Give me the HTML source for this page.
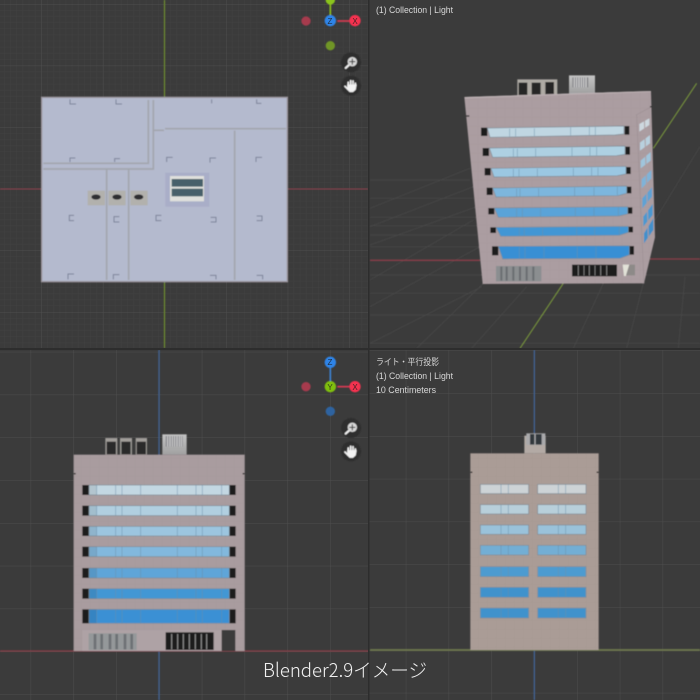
<!DOCTYPE html>
<html lang="ja">
<head>
<meta charset="utf-8">
<title>Blender2.9イメージ</title>
<style>
html,body{margin:0;padding:0;background:#3b3b3b;width:700px;height:700px;overflow:hidden}
svg{display:block}
text{font-family:"Liberation Sans","Noto Sans CJK JP",sans-serif}
.lbl{fill:#d8d8d8;font-size:9px}
.gz{fill:#1b1b1b;text-anchor:middle;font-size:8px;opacity:.8}
</style>
</head>
<body>
<svg width="700" height="700" viewBox="0 0 700 700" xmlns="http://www.w3.org/2000/svg">
<defs>
<filter id="b" x="-5%" y="-5%" width="110%" height="110%"><feGaussianBlur stdDeviation="0.45"/></filter>
<pattern id="gTL" patternUnits="userSpaceOnUse" x="41.3" y="4" width="61.6" height="61.6">
 <path d="M6.16 0V61.6M12.32 0V61.6M18.48 0V61.6M24.64 0V61.6M30.8 0V61.6M36.96 0V61.6M43.12 0V61.6M49.28 0V61.6M55.44 0V61.6M0 6.16H61.6M0 12.32H61.6M0 18.48H61.6M0 24.64H61.6M0 30.8H61.6M0 36.96H61.6M0 43.12H61.6M0 49.28H61.6M0 55.44H61.6" stroke="#414141" stroke-width=".5" fill="none"/>
 <path d="M0 0V61.6M0 0H61.6" stroke="#4e4e4e" stroke-width="1" fill="none"/>
</pattern>
<pattern id="gBL" patternUnits="userSpaceOnUse" x="30.6" y="9.4" width="42.8" height="42.8">
 <path d="M0 0V42.8M0 0H42.8" stroke="#4e4e4e" stroke-width="1" fill="none"/>
</pattern>
<pattern id="gBR" patternUnits="userSpaceOnUse" x="20.6" y="8" width="42.8" height="42.8">
 <path d="M0 0V42.8M0 0H42.8" stroke="#4d4d4d" stroke-width="1" fill="none"/>
</pattern>
<pattern id="tile" patternUnits="userSpaceOnUse" width="27" height="27">
 <path d="M0 0V27M0 0H27" stroke="#8f8285" stroke-opacity=".22" stroke-width="2" fill="none"/>
</pattern>
<linearGradient id="ac" x1="0" y1="0" x2="0" y2="1"><stop offset="0" stop-color="#c4c4c4"/><stop offset="1" stop-color="#a0a0a0"/></linearGradient>
<clipPath id="cTL"><rect x="0" y="0" width="368" height="348"/></clipPath>
<clipPath id="cTR"><rect x="369.5" y="0" width="331" height="348"/></clipPath>
<clipPath id="cBL"><rect x="0" y="350" width="368" height="350"/></clipPath>
<clipPath id="cBR"><rect x="369.5" y="350" width="331" height="350"/></clipPath>
<path id="mBL" d="M290 0V1M347 0V1M366 0V1M422 0V1M532 0V1M588 0V1M607 0V1M665 0V1" stroke="#6b8ea8" stroke-width="2" stroke-opacity=".7" fill="none"/>
<path id="mBR" d="M393 0V1M415 0V1M565 0V1M587 0V1" stroke="#6b8ea8" stroke-width="2" stroke-opacity=".7" fill="none"/>
</defs>

<rect width="700" height="700" fill="#2d2d2d"/>

<!-- TOP LEFT -->
<g clip-path="url(#cTL)">
<rect width="368" height="348" fill="#3b3b3b"/>
<rect width="368" height="348" fill="url(#gTL)"/>
<g filter="url(#b)">
<path d="M0 189H368" stroke="#8a3d48" stroke-width="1"/>
<path d="M164.5 0V348" stroke="#6a8a2c" stroke-width="1.2"/>
<g transform="scale(.33333)">
 <rect x="125" y="292" width="737" height="553" fill="#b4bace" stroke="#9a949c" stroke-width="4"/>
 <rect x="496" y="518" width="132" height="102" fill="#a9aec8"/>
 <g fill="none" stroke="#a3a6ae" stroke-width="5">
  <path d="M130 490H445V300"/>
  <path d="M130 507H460V300"/>
  <path d="M460 391H492M495 386H858"/>
  <path d="M320 505V840M386 505V840M704 392V840"/>
 </g>
 <g fill="none" stroke="#7c8299" stroke-width="3">
  <path d="M210 298v14h18M348 298v14h18M770 298v12h14M635 298v12M210 486v-12h16M344 486v-10h16M500 486v-14h18M630 488v-14h18M768 486v-14h18M222 646h-14v16h14M358 650h-16v16h16M484 646h-16v16h16M632 652h16v14h-16M770 648h16v14h-16M222 822h-18v16M358 824h-18v14M630 826h18v12M770 826h18v12"/>
 </g>
 <rect x="510" y="528" width="102" height="76" fill="#dfe0dc"/>
 <rect x="515" y="537" width="94" height="23" fill="#46606a"/>
 <rect x="515" y="566" width="94" height="23" fill="#46606a"/>
 <g fill="#b2b1ad"><rect x="263" y="572" width="52" height="44"/><rect x="325" y="572" width="52" height="44"/><rect x="391" y="572" width="52" height="44"/></g>
 <g fill="#2f2f31"><ellipse cx="288" cy="591" rx="14" ry="8"/><ellipse cx="351" cy="591" rx="14" ry="8"/><ellipse cx="416" cy="591" rx="14" ry="8"/></g>
 <!-- gizmo -->
 <path d="M991 0V45" stroke="#8bbe1c" stroke-width="5"/>
 <circle cx="991" cy="0" r="14" fill="#8bc41c"/>
 <path d="M1012 63H1050" stroke="#d83a52" stroke-width="5"/>
 <circle cx="991" cy="62" r="17" fill="#2f84e8"/>
 <circle cx="1065" cy="62" r="17" fill="#f5304f"/>
 <circle cx="918" cy="63" r="14" fill="#a63a4e"/>
 <circle cx="991" cy="137" r="14" fill="#6f9525"/>
 <circle cx="1053" cy="187" r="30" fill="#2e2e2e"/>
 <circle cx="1053" cy="257" r="30" fill="#2e2e2e"/>
 <path d="M1048 194L1037 204" stroke="#f0f0f0" stroke-width="6" stroke-linecap="round"/>
 <circle cx="1057" cy="185" r="14" fill="#d8d8d8"/>
 <path d="M1048 185H1066M1057 176V194" stroke="#333" stroke-width="3"/>
 <g stroke="#f2f2f2" stroke-width="5" stroke-linecap="round" fill="#f2f2f2">
  <path d="M1045 258V247M1052 256V242M1059 256V243M1066 260V250M1044 268L1035 259" fill="none"/>
  <path d="M1044 256H1067L1065 268L1058 274H1050L1044 268Z"/>
 </g>
</g>
</g>
<text x="330" y="24" class="gz">Z</text>
<text x="355" y="24" class="gz">X</text>
</g>

<!-- TOP RIGHT -->
<g clip-path="url(#cTR)">
<rect x="369" width="331" height="348" fill="#3b3b3b"/>
<g filter="url(#b)">
<g transform="translate(370,0) scale(.33333)">
 <g stroke="#4a4a4a" stroke-width="2" fill="none">
  <path d="M0 540H300M0 595H310M0 652H320M0 677H320M0 705H320M0 740H330M0 825H990M0 880H990M0 945H990M0 1030H990"/>
  <path d="M0 625L300 505M0 680L310 560M0 735L320 620M0 840L310 660M0 920L330 740M0 1030L335 860M140 1045L340 850M305 1045L470 860M610 1045L700 850M770 1045L820 850M925 1045L945 830M855 660L990 440"/>
 </g>
 <path d="M0 781H330M840 777H990" stroke="#8a3d48" stroke-width="4"/>
 <path d="M450 1045L580 850M850 445L980 250" stroke="#7a9a3c" stroke-width="3" fill="none"/>
 <!-- rooftop -->
 <path d="M442 238H562V290H442Z" fill="#aeaaa4"/>
 <path d="M446 248H472V286H446ZM485 248H512V286H485ZM526 246H552V285H526Z" fill="#262626"/>
 <path d="M597 226H675V282H597Z" fill="url(#ac)"/>
 <path d="M607 232H655V262H607Z" fill="#8a8a8e"/>
 <path d="M613 232v30M620 232v30M627 232v30M634 232v30M641 232v30M648 232v30" stroke="#d6d6d6" stroke-width="3"/>
 <path d="M440 290L600 280L840 274L700 285Z" fill="#b9bdd0"/>
 <!-- body -->
 <path d="M283 291L843 273L855 712L822 850L338 852Z" fill="#ab9da1"/>
 <path d="M283 291L843 273L855 712L822 850L338 852Z" fill="url(#tile)"/>
 <path d="M798 345L845 320M800 345L822 850" stroke="#9c8f93" stroke-width="2" fill="none"/>
 <path d="M283 291L843 273V276L285 295Z" fill="#bcb0b2"/>
 <path d="M288 348h10M840 320h6" stroke="#2a2a2a" stroke-width="4"/>
 <!-- side windows -->
 <path d="M808 372L838 355V375L808 395Z" fill="#cdd8df"/>
 <path d="M810 428L840 405V430L810 452Z" fill="#b8d0de"/>
 <path d="M812 482L842 456V482L812 505Z" fill="#a0c5dc"/>
 <path d="M815 538L844 510V535L815 565Z" fill="#7fb3d8"/>
 <path d="M817 595L846 562V590L817 625Z" fill="#5ea2d4"/>
 <path d="M820 650L848 612V645L820 680Z" fill="#4b98d0"/>
 <path d="M822 700L850 655V690L822 730Z" fill="#4390cb"/>
 <path d="M823 350L836 740" stroke="#ab9da1" stroke-width="3"/>
 <!-- black side blocks -->
 <g fill="#1e1e1e">
  <rect x="333" y="383" width="19" height="25"/><rect x="764" y="378" width="14" height="26"/>
  <rect x="338" y="444" width="19" height="24"/><rect x="766" y="440" width="14" height="24"/>
  <rect x="344" y="504" width="18" height="22"/><rect x="768" y="501" width="14" height="21"/>
  <rect x="350" y="563" width="18" height="22"/><rect x="770" y="560" width="14" height="20"/>
  <rect x="355" y="624" width="18" height="19"/><rect x="773" y="622" width="14" height="19"/>
  <rect x="361" y="682" width="17" height="17"/><rect x="775" y="680" width="14" height="17"/>
  <rect x="366" y="739" width="19" height="27"/><rect x="778" y="738" width="14" height="26"/>
 </g>
 <!-- glass -->
 <g stroke="#808c96" stroke-width="2">
  <path d="M352 384L762 378V402L735 405L360 412Z" fill="#c0d6e2"/>
  <path d="M358 444L765 438V463L740 467L368 472Z" fill="#aed0e2"/>
  <path d="M363 505L768 499V522L742 527L372 531Z" fill="#9bc7e2"/>
  <path d="M368 564L770 558V580L744 587L378 591Z" fill="#7db6dd"/>
  <path d="M373 624L773 620V642L746 648L385 652Z" fill="#5aa3d8"/>
  <path d="M378 682L775 679V697L748 706L392 709Z" fill="#4296d4"/>
  <path d="M385 739L778 737V765L750 775L398 777Z" fill="#388fd4"/>
 </g>
 <path d="M419 386V409M437 386V409M493 385V408M602 382V406M658 381V405M676 381V405M430 446V470M442 446V470M497 445V470M606 443V468M660 442V467M680 441V466M430 507V530M447 507V530M502 506V530M610 504V528M665 503V527M684 503V526M440 566V590M450 566V590M506 565V590M614 563V588M672 562V587M742 560V586M440 626V651M457 626V651M512 625V650M616 624V649M672 623V648M745 622V647M448 684V708M463 684V708M518 683V708M620 682V706M674 681V706M748 681V705M448 741V776M465 740V776M522 740V776M622 739V775M678 738V774" stroke="#6b8ea8" stroke-width="2" stroke-opacity=".7" fill="none"/>
 <!-- ground floor -->
 <rect x="378" y="798" width="136" height="46" fill="#8b8e90"/>
 <path d="M394 800v42M410 800v42M430 800v42M450 800v42M470 800v42M490 800v42" stroke="#6a6d71" stroke-width="6"/>
 <rect x="606" y="794" width="135" height="35" fill="#1f1f1f"/>
 <path d="M625 796v31M642 796v31M658 796v31M675 796v31M692 796v31M710 796v31" stroke="#9a9a9a" stroke-width="2"/>
 <path d="M758 794H778L768 828H762Z" fill="#e2e2d8"/>
 <path d="M778 794H795V826H768Z" fill="#8d8a88"/>
</g>
</g>
<text x="376" y="13" class="lbl" textLength="77" lengthAdjust="spacingAndGlyphs">(1) Collection | Light</text>
</g>

<!-- BOTTOM LEFT -->
<g clip-path="url(#cBL)">
<rect y="350" width="368" height="350" fill="#3b3b3b"/>
<rect y="350" width="368" height="350" fill="url(#gBL)"/>
<g filter="url(#b)">
<g transform="translate(0,350) scale(.33333)">
 <path d="M477 0V1050" stroke="#3f6191" stroke-width="4"/>
 <path d="M0 903H1110" stroke="#8a3d48" stroke-width="4"/>
 <!-- rooftop -->
 <g fill="#a09d99"><rect x="316" y="264" width="36" height="50"/><rect x="360" y="264" width="36" height="50"/><rect x="407" y="264" width="34" height="50"/></g>
 <g fill="#2a2a2a"><rect x="320" y="275" width="28" height="38"/><rect x="364" y="275" width="28" height="38"/><rect x="410" y="275" width="28" height="38"/></g>
 <rect x="487" y="253" width="73" height="61" fill="url(#ac)"/>
 <rect x="497" y="258" width="51" height="32" fill="#8a8a8e"/>
 <path d="M503 258v32M510 258v32M517 258v32M524 258v32M531 258v32M538 258v32M544 258v32" stroke="#d2d2d2" stroke-width="3"/>
 <!-- body -->
 <rect x="221" y="314" width="513" height="589" fill="#a99c9f"/>
 <rect x="221" y="314" width="513" height="589" fill="url(#tile)"/>
 <path d="M221 371h6M728 371h6" stroke="#2a2a2a" stroke-width="4"/>
 <!-- blocks -->
 <g fill="#1f1f1f">
  <rect x="247" y="405" width="20" height="30"/><rect x="688" y="405" width="19" height="30"/>
  <rect x="247" y="467" width="20" height="30"/><rect x="688" y="467" width="19" height="30"/>
  <rect x="247" y="529" width="20" height="29"/><rect x="688" y="529" width="19" height="29"/>
  <rect x="247" y="590" width="20" height="30"/><rect x="688" y="590" width="19" height="30"/>
  <rect x="247" y="654" width="20" height="30"/><rect x="688" y="654" width="19" height="30"/>
  <rect x="247" y="716" width="20" height="30"/><rect x="688" y="716" width="19" height="30"/>
  <rect x="247" y="778" width="20" height="42"/><rect x="688" y="778" width="19" height="42"/>
 </g>
 <g stroke="#808c96" stroke-width="2">
  <rect x="267" y="405" width="421" height="30" fill="#c3d7e2"/>
  <rect x="267" y="467" width="421" height="30" fill="#b1cfe0"/>
  <rect x="267" y="529" width="421" height="29" fill="#9cc5df"/>
  <rect x="267" y="590" width="421" height="30" fill="#82b8dd"/>
  <rect x="267" y="654" width="421" height="30" fill="#5ea5d8"/>
  <rect x="267" y="716" width="421" height="30" fill="#4397d4"/>
  <rect x="267" y="778" width="421" height="42" fill="#3a90d4"/>
 </g>
 <g fill="#000" opacity=".08">
  <rect x="267" y="405" width="23" height="30"/><rect x="267" y="467" width="23" height="30"/><rect x="267" y="529" width="23" height="29"/><rect x="267" y="590" width="23" height="30"/><rect x="267" y="654" width="23" height="30"/><rect x="267" y="716" width="23" height="30"/><rect x="267" y="778" width="23" height="42"/>
 </g>
 <use href="#mBL" transform="translate(0,405) scale(1,30)"/>
 <use href="#mBL" transform="translate(0,467) scale(1,30)"/>
 <use href="#mBL" transform="translate(0,529) scale(1,29)"/>
 <use href="#mBL" transform="translate(0,590) scale(1,30)"/>
 <use href="#mBL" transform="translate(0,654) scale(1,30)"/>
 <use href="#mBL" transform="translate(0,716) scale(1,30)"/>
 <use href="#mBL" transform="translate(0,778) scale(1,42)"/>
 <!-- ground floor -->
 <rect x="247" y="840" width="459" height="63" fill="#aea2a5"/>
 <rect x="266" y="850" width="144" height="50" fill="#94989a"/>
 <path d="M285 852v46M305 852v46M330 852v46M350 852v46M375 852v46M395 852v46" stroke="#6d7175" stroke-width="8"/>
 <rect x="497" y="847" width="144" height="53" fill="#1f1f1f"/>
 <path d="M515 852v46M533 852v46M550 852v46M568 852v46M586 852v46M604 852v46M620 852v46" stroke="#9a9a9a" stroke-width="3"/>
 <rect x="665" y="840" width="41" height="63" fill="#3b3b3b"/>
 <!-- gizmo -->
 <path d="M991 50V95" stroke="#3a80d0" stroke-width="5"/>
 <path d="M1012 110H1050" stroke="#d83a52" stroke-width="5"/>
 <circle cx="991" cy="37" r="17" fill="#2f84e8"/>
 <circle cx="991" cy="110" r="17" fill="#7fbf10"/>
 <circle cx="1065" cy="110" r="17" fill="#f5304f"/>
 <circle cx="918" cy="110" r="14" fill="#a63a4e"/>
 <circle cx="991" cy="184" r="14" fill="#2f64a0"/>
 <circle cx="1053" cy="234" r="30" fill="#2e2e2e"/>
 <circle cx="1053" cy="304" r="30" fill="#2e2e2e"/>
 <path d="M1048 241L1037 251" stroke="#f0f0f0" stroke-width="6" stroke-linecap="round"/>
 <circle cx="1057" cy="232" r="14" fill="#d8d8d8"/>
 <path d="M1048 232H1066M1057 223V241" stroke="#333" stroke-width="3"/>
 <g transform="translate(0,47)" stroke="#f2f2f2" stroke-width="5" stroke-linecap="round" fill="#f2f2f2">
  <path d="M1045 258V247M1052 256V242M1059 256V243M1066 260V250M1044 268L1035 259" fill="none"/>
  <path d="M1044 256H1067L1065 268L1058 274H1050L1044 268Z"/>
 </g>
</g>
</g>
<text x="330" y="365" class="gz">Z</text>
<text x="330" y="390" class="gz">Y</text>
<text x="355" y="390" class="gz">X</text>
</g>

<!-- BOTTOM RIGHT -->
<g clip-path="url(#cBR)">
<rect x="369" y="350" width="331" height="350" fill="#3b3b3b"/>
<rect x="369" y="350" width="331" height="350" fill="url(#gBR)"/>
<g filter="url(#b)">
<g transform="translate(370,350) scale(.33333)">
 <path d="M493 0V1050" stroke="#3f6191" stroke-width="4"/>
 <path d="M0 900H990" stroke="#6f7a4e" stroke-width="5"/>
 <rect x="463" y="257" width="64" height="53" fill="#b3aaa5"/>
 <rect x="469" y="250" width="57" height="35" fill="#a9a9ab"/>
 <path d="M480 252H493V284H480ZM497 252H515V284H497Z" fill="#33383c"/>
 <rect x="301" y="310" width="385" height="590" fill="#aa9c96"/>
 <rect x="301" y="310" width="385" height="590" fill="url(#tile)"/>
 <path d="M301 367h6M680 367h6" stroke="#2a2a2a" stroke-width="4"/>
 <g stroke="#808c96" stroke-width="2">
  <rect x="331" y="403" width="145" height="28" fill="#cdd3d6"/><rect x="503" y="403" width="145" height="28" fill="#cdd3d6"/>
  <rect x="331" y="464" width="145" height="28" fill="#b8cfda"/><rect x="503" y="464" width="145" height="28" fill="#b8cfda"/>
  <rect x="331" y="525" width="145" height="28" fill="#9ac2da"/><rect x="503" y="525" width="145" height="28" fill="#9ac2da"/>
  <rect x="331" y="586" width="145" height="29" fill="#73aed4"/><rect x="503" y="586" width="145" height="29" fill="#73aed4"/>
  <rect x="331" y="650" width="145" height="30" fill="#4e9bd0"/><rect x="503" y="650" width="145" height="30" fill="#4e9bd0"/>
  <rect x="331" y="712" width="145" height="30" fill="#3f92cc"/><rect x="503" y="712" width="145" height="30" fill="#3f92cc"/>
  <rect x="331" y="774" width="145" height="30" fill="#3f92cc"/><rect x="503" y="774" width="145" height="30" fill="#3f92cc"/>
 </g>
 <use href="#mBR" transform="translate(0,403) scale(1,28)"/>
 <use href="#mBR" transform="translate(0,464) scale(1,28)"/>
 <use href="#mBR" transform="translate(0,525) scale(1,28)"/>
 <use href="#mBR" transform="translate(0,586) scale(1,29)"/>
 <use href="#mBR" transform="translate(0,650) scale(1,30)"/>
 <use href="#mBR" transform="translate(0,712) scale(1,30)"/>
 <use href="#mBR" transform="translate(0,774) scale(1,30)"/>
</g>
</g>
<text x="376" y="365" class="lbl" textLength="63" lengthAdjust="spacingAndGlyphs">ライト・平行投影</text>
<text x="376" y="379" class="lbl" textLength="77" lengthAdjust="spacingAndGlyphs">(1) Collection | Light</text>
<text x="376" y="393" class="lbl" textLength="60" lengthAdjust="spacingAndGlyphs">10 Centimeters</text>
</g>

<text x="263" y="677" fill="#f2f2f2" font-size="19" textLength="164" lengthAdjust="spacingAndGlyphs" style="font-family:'Noto Sans CJK JP','Liberation Sans',sans-serif;font-weight:300">Blender2.9イメージ</text>
</svg>
</body>
</html>
